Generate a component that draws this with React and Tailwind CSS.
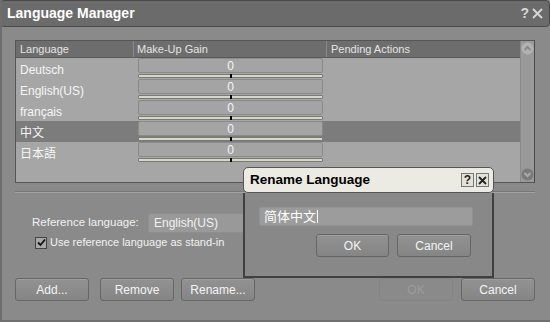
import React from "react";

const langs = [
  { name: "Deutsch" },
  { name: "English(US)" },
  { name: "français" },
  { name: "中文", sel: true },
  { name: "日本語" },
];

function Btn({ children, className = "", disabled }) {
  return (
    <div
      className={
        "h-[23px] flex items-center justify-center rounded-[3px] border " +
        (disabled
          ? "border-[#838383] bg-[#8a8a8a] text-[#9c9c9c] "
          : "border-[#666] bg-gradient-to-b from-[#929292] to-[#858585] text-[#f4f4f4] shadow-[inset_0_1px_0_#9d9d9d] ") +
        className
      }
    >
      {children}
    </div>
  );
}

function GainCell() {
  return (
    <div className="ml-[4px] w-[185px] flex flex-col">
      <div className="h-[15px] rounded-[2px] border border-[#8a8a8a] bg-[#a4a4a4] flex items-center justify-center text-[#f4f4f4] text-[12px] leading-none">
        0
      </div>
      <div className="relative mt-[1px] h-[4px] border border-[#7a7a72] bg-[#d6d6ca] rounded-[1px]">
        <div className="absolute left-[91px] top-[-1px] w-[2px] h-[4px] bg-black" />
      </div>
    </div>
  );
}

export default function App() {
  return (
    <div className="relative w-[550px] h-[322px] bg-[#8a8a8a] overflow-hidden font-['Liberation_Sans','Noto_Sans_CJK_SC',sans-serif] text-[11px] text-[#f2f2f2] border-l-2 border-[#6e6e6e] border-b-2 border-b-[#707070]">
      {/* title bar */}
      <div className="h-[27px] bg-[#6b6b6b] border border-[#4a4a4a] rounded-[4px] flex items-center justify-between pl-[6px] pr-[6px] -ml-[2px]">
        <div className="font-bold text-[14px] text-white">Language Manager</div>
        <div className="flex items-center gap-[3px] text-[#d8d8d8] text-[14px] font-bold">
          <span>?</span>
          <svg width="11" height="11" viewBox="0 0 11 11">
            <path d="M1 1 L10 10 M10 1 L1 10" stroke="#d8d8d8" strokeWidth="1.8" />
          </svg>
        </div>
      </div>

      <div className="pl-[13px] pr-[15px]">
        {/* list */}
        <div className="mt-[13px] h-[143px] border border-[#555] border-r-[#4a4a4a] flex bg-[#a6a6a6]">
          <div className="flex-1 flex flex-col">
            <div className="h-[17px] bg-[#6d6d6d] border-b border-[#5a5a5a] flex items-center text-[#e4e4e4]">
              <div className="w-[118px] pl-[4px] border-r border-[#8a8a8a] h-full flex items-center">Language</div>
              <div className="w-[193px] pl-[3px] border-r border-[#8a8a8a] h-full flex items-center">Make-Up Gain</div>
              <div className="pl-[4px]">Pending Actions</div>
            </div>
            {langs.map((l) => (
              <div
                key={l.name}
                className={"h-[21px] flex items-start " + (l.sel ? "bg-[#7c7c7c]" : "")}
              >
                <div className="w-[118px] pl-[4px] pt-[2px] h-full flex items-center text-[12px] text-[#f6f6f6]">
                  {l.name}
                </div>
                <GainCell />
              </div>
            ))}
          </div>
          <div className="w-[14px] bg-[#999] border-l border-[#8a8a8a] flex flex-col items-center justify-between py-[1px]">
            <svg width="13" height="13" viewBox="0 0 13 13">
              <circle cx="6.5" cy="6.5" r="6" fill="#b2b2b2" />
              <path d="M3.5 8 L6.5 5 L9.5 8" stroke="#8a8a8a" strokeWidth="2" fill="none" />
            </svg>
            <svg width="13" height="13" viewBox="0 0 13 13">
              <circle cx="6.5" cy="6.5" r="6" fill="#7a7a7a" />
              <path d="M3.5 5 L6.5 8 L9.5 5" stroke="#a8a8a8" strokeWidth="2" fill="none" />
            </svg>
          </div>
        </div>

        {/* separator */}
        <div className="mt-[8px] h-[2px] border-t border-[#777] border-b border-b-[#a2a2a2]" />

        {/* reference */}
        <div className="mt-[20px] flex items-center h-[20px]">
          <div className="w-[133px] pl-[17px] text-[11.5px]">Reference language:</div>
          <div className="w-[200px] h-[20px] bg-[#999] border border-[#8e8e8e] rounded-[2px] pl-[5px] flex items-center text-[12px]">
            English(US)
          </div>
        </div>
        <div className="mt-[3px] flex items-center h-[13px] pl-[20px]">
          <div className="w-[12px] h-[12px] border border-[#444] bg-[#a8a8a8] flex items-center justify-center">
            <svg width="9" height="9" viewBox="0 0 9 9">
              <path d="M1 4.5 L3.5 7 L8 1.5" stroke="#111" strokeWidth="1.8" fill="none" />
            </svg>
          </div>
          <div className="ml-[3px] text-[11px]">Use reference language as stand-in</div>
        </div>

        {/* buttons */}
        <div className="mt-[29px] flex items-center text-[12px]">
          <Btn className="w-[74px]">Add...</Btn>
          <Btn className="w-[74px] ml-[11px]">Remove</Btn>
          <Btn className="w-[74px] ml-[7px]">Rename...</Btn>
          <div className="flex-1" />
          <Btn disabled className="w-[74px]">OK</Btn>
          <Btn className="w-[74px] ml-[8px]">Cancel</Btn>
        </div>
      </div>

      {/* Rename dialog overlay */}
      <div className="absolute left-[241px] top-[167px] w-[251px] h-[111px] flex flex-col">
        <div className="h-[26px] bg-[#ebebe4] border border-[#555] rounded-[5px] flex items-center justify-between pl-[6px] pr-[4px]">
          <div className="font-bold text-[13.5px] text-black">Rename Language</div>
          <div className="flex items-center gap-[2px]">
            <div className="w-[13px] h-[14px] border border-[#777] bg-[#e2e2da] flex items-center justify-center text-[12px] font-bold text-[#222] leading-none">
              ?
            </div>
            <div className="w-[13px] h-[14px] border border-[#777] bg-[#e2e2da] flex items-center justify-center">
              <svg width="9" height="9" viewBox="0 0 9 9">
                <path d="M1 1 L8 8 M8 1 L1 8" stroke="#222" strokeWidth="1.8" />
              </svg>
            </div>
          </div>
        </div>
        <div className="flex-1 bg-[#888] border-l-2 border-r-2 border-b-2 border-[#404040] px-[14px] pt-[14px]">
          <div className="h-[19px] w-[214px] bg-[#9c9c9c] border border-[#929292] rounded-[2px] flex items-center pl-[4px] text-[13px] text-white">
            简体中文<span className="ml-[1px] w-[1px] h-[13px] bg-white" />
          </div>
          <div className="mt-[8px] flex justify-end pr-[7px] text-[12px]">
            <Btn className="w-[73px] h-[22px]">OK</Btn>
            <Btn className="w-[74px] ml-[8px] h-[22px]">Cancel</Btn>
          </div>
        </div>
      </div>
    </div>
  );
}
